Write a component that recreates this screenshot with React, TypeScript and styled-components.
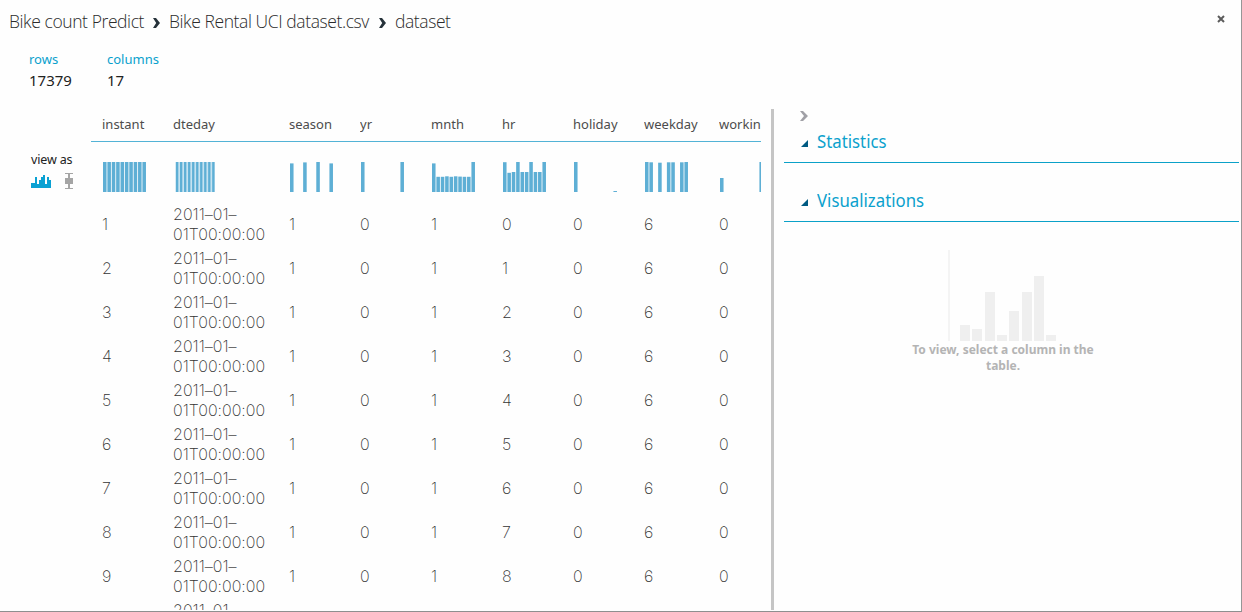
import React from 'react';
import styled, { createGlobalStyle } from 'styled-components';

const GlobalStyle = createGlobalStyle`
  * { box-sizing: border-box; }
  body { margin: 0; background: #fff; overflow: hidden; }
`;

const Window = styled.div`
  width: 1242px;
  height: 612px;
  display: flex;
  flex-direction: column;
  position: relative;
  overflow: hidden;
  background: #fefefe;
  border-right: 1px solid #969696;
  border-bottom: 1px solid #8f8f8f;
  font-family: 'Noto Sans', 'Open Sans', sans-serif;
`;

const EdgeMark = styled.span`
  position: absolute;
  right: -1px;
  top: 99px;
  width: 1px;
  height: 4px;
  background: #111;
`;

const TitleBar = styled.header`
  height: 44px;
  flex: none;
  display: flex;
  align-items: center;
  padding: 0 16px 0 9px;
`;

const Crumb = styled.span<{ $width: number }>`
  width: ${(p) => p.$width}px;
  flex: none;
  margin-top: -2px;
  font-family: 'Open Sans', sans-serif;
  font-weight: 300;
  font-size: 17.5px;
  line-height: 24px;
  letter-spacing: -0.41px;
  color: #2b2b2b;
  white-space: nowrap;
`;

const CrumbArrow = styled.svg`
  width: 7px;
  height: 10px;
  margin: 2px 9px 0 9px;
  flex: none;
`;

const CloseIcon = styled.svg`
  width: 8px;
  height: 8px;
  margin: -6px 0 0 auto;
`;

const Summary = styled.section`
  height: 65px;
  flex: none;
  display: flex;
  padding: 5px 0 0 29px;
`;

const Stat = styled.div`
  width: 78px;
`;

const StatLabel = styled.div`
  font-size: 13px;
  line-height: 20px;
  color: #0aa1cd;
`;

const StatValue = styled.div`
  font-size: 15px;
  line-height: 22px;
  color: #222;
`;

const Body = styled.main`
  height: 501px;
  flex: none;
  display: flex;
  overflow: hidden;
`;

const ViewAs = styled.aside`
  width: 91px;
  flex: none;
  padding: 41px 0 0 31px;
`;

const ViewLabel = styled.div`
  font-size: 12.5px;
  line-height: 20px;
  letter-spacing: -0.15px;
  color: #222;
`;

const ViewIcons = styled.div`
  display: flex;
  gap: 14px;
  margin-top: 3px;
`;

const BarsIcon = styled.svg`
  width: 20px;
  height: 13px;
  margin-top: 2px;
`;

const BoxPlotIcon = styled.svg`
  width: 8px;
  height: 16px;
`;

const Table = styled.div`
  width: 670px;
  flex: none;
  overflow: hidden;
`;

const Row = styled.div<{ $height: number; $ruled?: boolean }>`
  width: 700px;
  height: ${(p) => p.$height}px;
  display: grid;
  grid-template-columns: 71px 116px 71px 71px 71px 71px 71px 75px 83px;
  align-items: center;
  border-bottom: ${(p) => (p.$ruled ? '1px solid #53b3d6' : 'none')};
`;

const HeadCell = styled.div`
  padding: 0 0 2px 11px;
  font-size: 13px;
  line-height: 20px;
  color: #4c4c4c;
  white-space: nowrap;
`;

const HeadClip = styled.div<{ $width?: number }>`
  overflow: hidden;
  width: ${(p) => (p.$width ? `${p.$width}px` : 'auto')};
`;

const ChartCell = styled.div`
  padding-left: 11px;
  height: 30px;
  margin-top: 10px;
`;

const Cell = styled.div`
  padding-left: 11px;
  font-family: Inter, 'Liberation Sans', sans-serif;
  font-weight: 200;
  font-size: 16px;
  line-height: 20px;
  font-feature-settings: 'calt' 0;
  color: #333;
  white-space: pre;
`;

const Divider = styled.div`
  width: 3px;
  margin-left: 10px;
  flex: none;
  background: #c5c5c5;
`;

const Panel = styled.aside`
  width: 455px;
  margin-left: 10px;
  flex: none;
  padding-top: 2px;
`;

const Collapse = styled.svg`
  display: block;
  width: 8px;
  height: 10px;
  margin-left: 16px;
`;

const SectionHead = styled.div<{ $top: number }>`
  height: 32px;
  margin-top: ${(p) => p.$top}px;
  display: flex;
  align-items: flex-start;
  padding-left: 17px;
  gap: 9px;
  border-bottom: 1px solid #0ba1c8;
`;

const Disclosure = styled.svg`
  width: 7px;
  height: 7px;
  margin-top: 9px;
`;

const SectionTitle = styled.h2`
  margin: -1px 0 0;
  font-weight: 400;
  font-size: 18px;
  line-height: 22px;
  color: #0ba1cd;
  transform: scaleX(0.932);
  transform-origin: left;
`;

const Empty = styled.div`
  margin: 28px 0 0 119px;
  width: 200px;
  text-align: center;
`;

const EmptyChart = styled.svg`
  display: block;
  width: 110px;
  height: 91px;
  margin-left: 45px;
`;

const EmptyText = styled.p`
  margin: 1px 0 0;
  font-weight: 700;
  font-size: 12px;
  line-height: 16px;
  color: #b4b4b4;
  white-space: pre;
`;

type Column = { name: string; bars: number[] };

const columns: Column[] = [
  { name: 'instant', bars: Array(10).fill(30) },
  { name: 'dteday', bars: [] },
  { name: 'season', bars: [28.6, 0, 0, 29.6, 0, 0, 30, 0, 0, 28.6] },
  { name: 'yr', bars: [30, 0, 0, 0, 0, 0, 0, 0, 0, 30] },
  { name: 'mnth', bars: [28.6, 15.2, 15.2, 15.7, 15.2, 15.7, 15.4, 15.2, 15.2, 30] },
  { name: 'hr', bars: [29.8, 19.2, 20, 30, 20, 20, 30, 20, 20, 30] },
  { name: 'holiday', bars: [30, 0, 0, 0, 0, 0, 0, 0, 0, 1] },
  { name: 'weekday', bars: [30, 29.7, 0, 29.3, 0, 29.7, 29.7, 0, 29.7, 30] },
  { name: 'workin', bars: [14, 0, 0, 0, 0, 0, 0, 0, 0, 30] },
];

const hours = [0, 1, 2, 3, 4, 5, 6, 7, 8];

function Histogram({ bars }: { bars: number[] }) {
  return (
    <svg width="48" height="30" viewBox="0 0 48 30">
      {bars.map((h, i) => (
        <rect key={i} x={1 + i * 4.38} y={30 - h} width="3.55" height={h} fill="#5eafd5" />
      ))}
    </svg>
  );
}

function DateHistogram() {
  return (
    <svg width="48" height="30" viewBox="0 0 48 30">
      <rect x="2.3" width="39.7" height="30" fill="#c6e3f1" />
      {Array.from({ length: 10 }, (_, i) => (
        <rect key={i} x={3 + i * 4.02} width="2.3" height="30" fill="#5eafd5" />
      ))}
    </svg>
  );
}

function Arrow() {
  return (
    <CrumbArrow viewBox="0 0 7 10">
      <path d="M0 0h3l4 5-4 5H0l3.2-5z" fill="#26323a" />
    </CrumbArrow>
  );
}

function Section({ title, top }: { title: string; top: number }) {
  return (
    <SectionHead $top={top}>
      <Disclosure viewBox="0 0 7 7">
        <path d="M7 0v7H0z" fill="#005a82" />
      </Disclosure>
      <SectionTitle>{title}</SectionTitle>
    </SectionHead>
  );
}

export default function App() {
  return (
    <Window>
      <GlobalStyle />
      <EdgeMark />
      <TitleBar>
        <Crumb $width={135}>Bike count Predict</Crumb>
        <Arrow />
        <Crumb $width={201}>Bike Rental UCI dataset.csv</Crumb>
        <Arrow />
        <Crumb $width={56}>dataset</Crumb>
        <CloseIcon viewBox="0 0 8 8">
          <path d="M1 1l6 6M7 1L1 7" stroke="#5c5c5c" strokeWidth="2" />
        </CloseIcon>
      </TitleBar>
      <Summary>
        <Stat>
          <StatLabel>rows</StatLabel>
          <StatValue>17379</StatValue>
        </Stat>
        <Stat>
          <StatLabel>columns</StatLabel>
          <StatValue>17</StatValue>
        </Stat>
      </Summary>
      <Body>
        <ViewAs>
          <ViewLabel>view as</ViewLabel>
          <ViewIcons>
            <BarsIcon viewBox="0 0 20 13">
              <path
                d="M0 13V8h4V2h2v7h2V5h2V2h2V0h2v9h2V2h2v3h2v8z"
                fill="#0aa1d3"
              />
            </BarsIcon>
            <BoxPlotIcon viewBox="0 0 8 16">
              <path d="M0 0h8v1H5v4h3v6H5v4h3v1H0v-1h3v-4H0V5h3V1H0z" fill="#a5a5a5" />
            </BoxPlotIcon>
          </ViewIcons>
        </ViewAs>
        <Table>
          <Row $height={33} $ruled>
            {columns.map((c) => (
              <HeadCell key={c.name}>
                <HeadClip $width={c.name === 'workin' ? 42 : undefined}>{c.name}</HeadClip>
              </HeadCell>
            ))}
          </Row>
          <Row $height={60}>
            {columns.map((c) => (
              <ChartCell key={c.name}>
                {c.name === 'dteday' ? <DateHistogram /> : <Histogram bars={c.bars} />}
              </ChartCell>
            ))}
          </Row>
          {hours.map((h) => (
            <Row key={h} $height={44}>
              <Cell>{h + 1}</Cell>
              <Cell>{'2011–01–\n01T00:00:00'}</Cell>
              <Cell>1</Cell>
              <Cell>0</Cell>
              <Cell>1</Cell>
              <Cell>{h}</Cell>
              <Cell>0</Cell>
              <Cell>6</Cell>
              <Cell>0</Cell>
            </Row>
          ))}
          <Row $height={44}>
            <Cell />
            <Cell>{'2011–01–\n '}</Cell>
          </Row>
        </Table>
        <Divider />
        <Panel>
          <Collapse viewBox="0 0 8 10">
            <path d="M0 0h3l5 5-5 5H0l4-5z" fill="#a0a0a6" />
          </Collapse>
          <Section title="Statistics" top={10} />
          <Section title="Visualizations" top={27} />
          <Empty>
            <EmptyChart viewBox="0 0 110 91">
              <g fill="#efefef">
                <rect x="0.3" y="0" width="1.4" height="91" />
                <rect x="12" y="75" width="10" height="16" />
                <rect x="24" y="79" width="10" height="12" />
                <rect x="37" y="42" width="10" height="49" />
                <rect x="49" y="85" width="10" height="6" />
                <rect x="61" y="61" width="10" height="30" />
                <rect x="74" y="42" width="10" height="49" />
                <rect x="86" y="26" width="10" height="65" />
                <rect x="98" y="85" width="10" height="6" />
              </g>
            </EmptyChart>
            <EmptyText>{'To view, select a column in the\ntable.'}</EmptyText>
          </Empty>
        </Panel>
      </Body>
    </Window>
  );
}
